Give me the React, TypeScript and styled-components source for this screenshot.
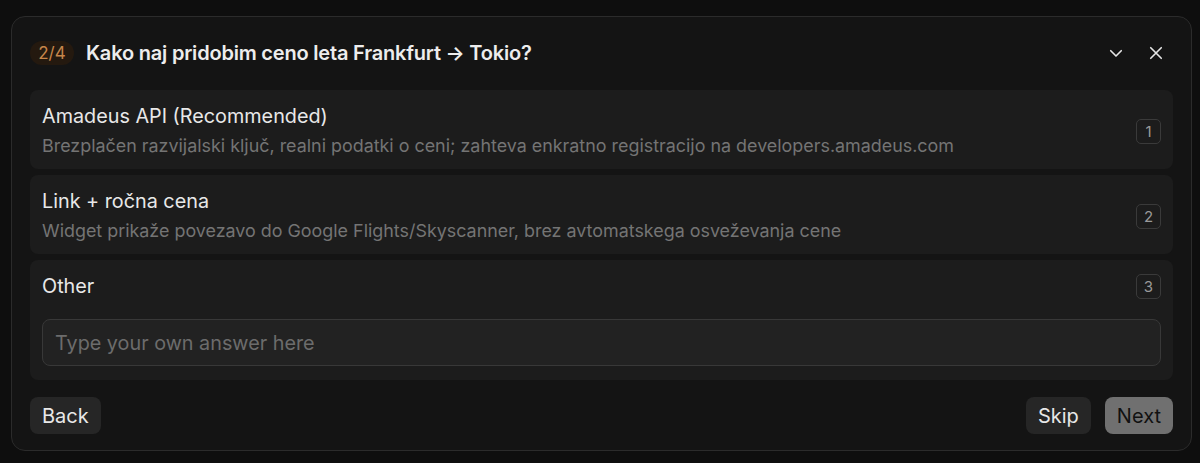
import React from 'react';
import styled, { createGlobalStyle } from 'styled-components';

const GlobalStyle = createGlobalStyle`
  html, body {
    margin: 0;
    padding: 0;
    background: #0e0e0e;
    font-family: Inter, "Noto Sans", sans-serif;
    -webkit-font-smoothing: antialiased;
  }
`;

const Page = styled.div`
  width: 1200px;
  height: 463px;
  padding: 16px 8px 12px 11px;
  box-sizing: border-box;
`;

const Card = styled.div`
  width: 1181px;
  height: 435px;
  box-sizing: border-box;
  background: #141414;
  border: 1px solid #2b2b2b;
  border-radius: 14px;
  padding: 20px 18px 16px 18px;
  display: flex;
  flex-direction: column;
`;

const Header = styled.div`
  display: flex;
  align-items: center;
  gap: 12px;
  height: 32px;
  margin-bottom: 21px;
`;

const Step = styled.span`
  display: inline-flex;
  align-items: center;
  justify-content: center;
  width: 44px;
  height: 24px;
  border-radius: 12px;
  background: #24190f;
  color: #c7864a;
  font-size: 17px;
`;

const Title = styled.h2`
  flex: 1;
  margin: 0;
  color: #ededed;
  font-size: 20px;
  font-weight: 600;
  letter-spacing: -0.2px;
`;

const IconButton = styled.button`
  width: 28px;
  height: 28px;
  padding: 0;
  display: inline-flex;
  align-items: center;
  justify-content: center;
  background: none;
  border: none;
  color: #e6e6e6;
  cursor: pointer;
`;

const Icons = styled.div`
  display: flex;
  gap: 12px;
  margin-right: 3px;
`;

const Options = styled.div`
  display: flex;
  flex-direction: column;
  gap: 6px;
`;

const Option = styled.div<{ $tall?: boolean }>`
  background: #1c1c1c;
  border-radius: 8px;
  padding: 13px 12px 12px 12px;
  height: ${({ $tall }) => ($tall ? '120px' : '79px')};
  box-sizing: border-box;
`;

const OptionRow = styled.div`
  display: flex;
  align-items: center;
`;

const OptionText = styled.div`
  flex: 1;
`;

const OptionTitle = styled.div`
  color: #e8e8e8;
  font-size: 19.8px;
  line-height: 26px;
`;

const OptionDesc = styled.div`
  color: #747474;
  font-size: 17.9px;
  line-height: 26px;
  margin-top: 4px;
`;

const Key = styled.span`
  display: inline-flex;
  align-items: center;
  justify-content: center;
  width: 25px;
  height: 25px;
  box-sizing: border-box;
  border: 1px solid #3a3a3a;
  border-radius: 5px;
  color: #9a9a9a;
  font-size: 15px;
`;

const Input = styled.input`
  display: block;
  width: 100%;
  height: 47px;
  margin-top: 20px;
  box-sizing: border-box;
  background: #222222;
  border: 1px solid #383838;
  border-radius: 8px;
  padding: 0 12px;
  color: #e8e8e8;
  font-family: inherit;
  font-size: 19.8px;
  outline: none;

  &::placeholder {
    color: #6c6c6c;
  }
`;

const Footer = styled.div`
  display: flex;
  align-items: center;
  margin-top: auto;
  gap: 14px;
`;

const Spacer = styled.div`
  flex: 1;
`;

const Button = styled.button<{ $primary?: boolean }>`
  height: 37px;
  padding: 0 12px;
  border: none;
  border-radius: 8px;
  font-family: inherit;
  font-size: 20px;
  cursor: pointer;
  background: ${({ $primary }) => ($primary ? '#707070' : '#262626')};
  color: ${({ $primary }) => ($primary ? '#111111' : '#e8e8e8')};
`;

const ChevronDown = () => (
  <svg width="18" height="18" viewBox="0 0 24 24" fill="none" stroke="currentColor" strokeWidth="2.2" strokeLinecap="round" strokeLinejoin="round">
    <path d="M5 9l7 7 7-7" />
  </svg>
);

const Close = () => (
  <svg width="18" height="18" viewBox="0 0 24 24" fill="none" stroke="currentColor" strokeWidth="2.2" strokeLinecap="round">
    <path d="M5 5l14 14M19 5L5 19" />
  </svg>
);

const choices = [
  {
    title: 'Amadeus API (Recommended)',
    desc: 'Brezplačen razvijalski ključ, realni podatki o ceni; zahteva enkratno registracijo na developers.amadeus.com',
  },
  {
    title: 'Link + ročna cena',
    desc: 'Widget prikaže povezavo do Google Flights/Skyscanner, brez avtomatskega osveževanja cene',
  },
];

export default function App() {
  return (
    <>
      <GlobalStyle />
      <Page>
        <Card>
          <Header>
            <Step>2/4</Step>
            <Title>Kako naj pridobim ceno leta Frankfurt → Tokio?</Title>
            <Icons>
              <IconButton aria-label="Collapse">
                <ChevronDown />
              </IconButton>
              <IconButton aria-label="Close">
                <Close />
              </IconButton>
            </Icons>
          </Header>
          <Options>
            {choices.map((c, i) => (
              <Option key={c.title}>
                <OptionRow>
                  <OptionText>
                    <OptionTitle>{c.title}</OptionTitle>
                    <OptionDesc>{c.desc}</OptionDesc>
                  </OptionText>
                  <Key>{i + 1}</Key>
                </OptionRow>
              </Option>
            ))}
            <Option $tall>
              <OptionRow>
                <OptionText>
                  <OptionTitle>Other</OptionTitle>
                </OptionText>
                <Key>3</Key>
              </OptionRow>
              <Input placeholder="Type your own answer here" />
            </Option>
          </Options>
          <Footer>
            <Button>Back</Button>
            <Spacer />
            <Button>Skip</Button>
            <Button $primary>Next</Button>
          </Footer>
        </Card>
      </Page>
    </>
  );
}
